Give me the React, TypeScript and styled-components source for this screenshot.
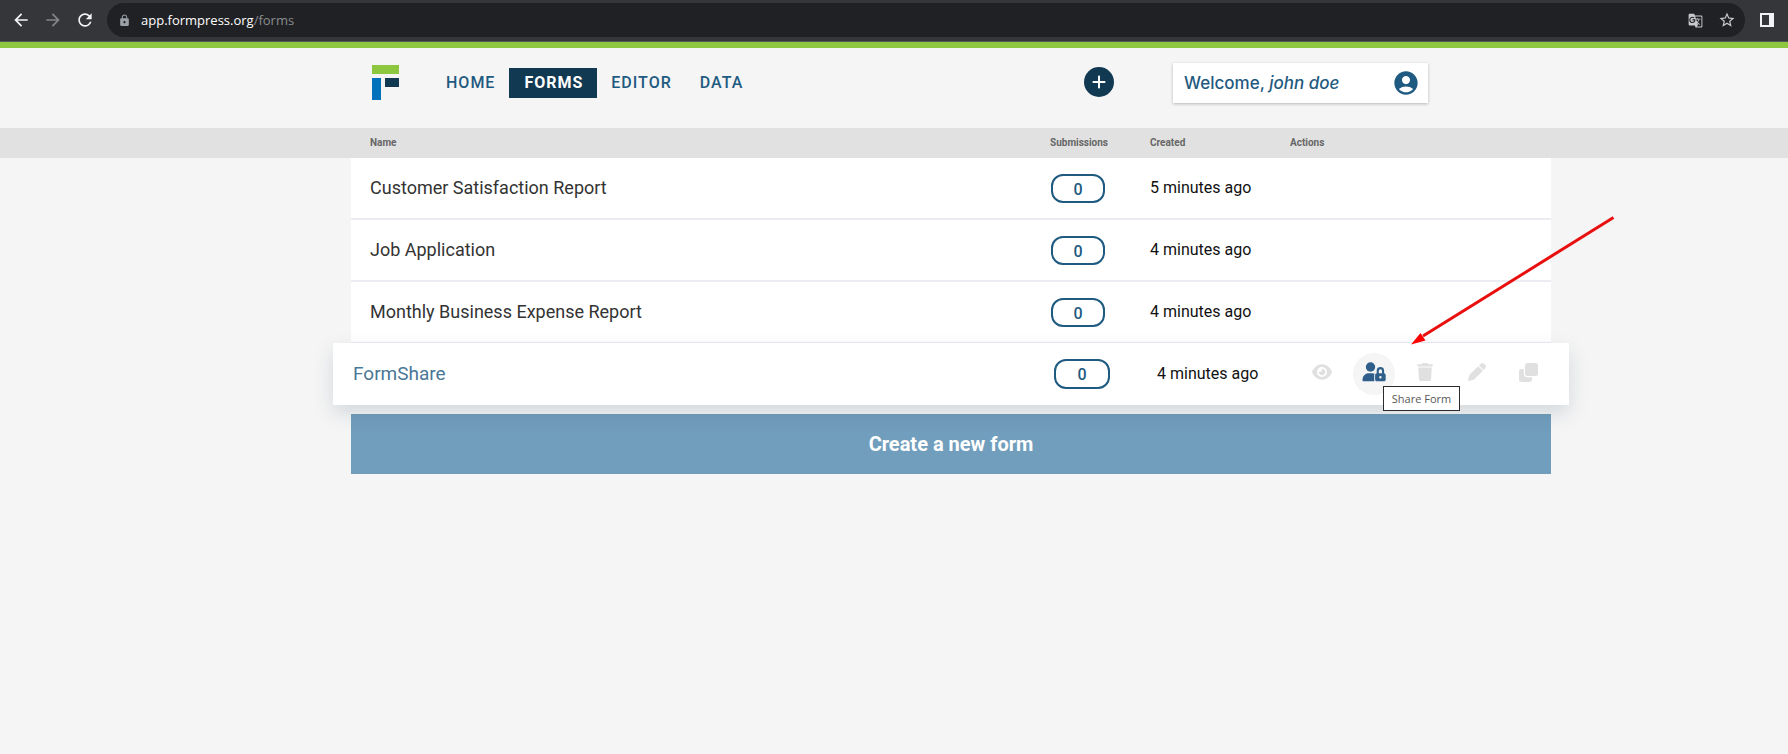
import React from "react";
import styled, { createGlobalStyle, css } from "styled-components";
import { FaEye, FaTrash, FaPen, FaPlus } from "react-icons/fa6";
import {
  MdAccountCircle,
  MdArrowBack,
  MdArrowForward,
  MdGTranslate,
  MdLock,
  MdRefresh,
  MdStarBorder,
} from "react-icons/md";

const GlobalStyle = createGlobalStyle`
  * { box-sizing: border-box; }
  body {
    margin: 0;
    background: #f5f5f5;
    font-family: Roboto, "Liberation Sans", sans-serif;
  }
  button { font: inherit; border: 0; padding: 0; cursor: pointer; }
`;

const BrowserBar = styled.div`
  display: flex;
  align-items: center;
  height: 42px;
  padding: 0 14px 1px 11px;
  background: #35363a;
  border-bottom: 1px solid #55565a;
`;

const BrowserButton = styled.button<{ $dim?: boolean }>`
  display: flex;
  align-items: center;
  justify-content: center;
  width: 20px;
  height: 20px;
  margin-right: 12px;
  background: none;
  color: ${(p) => (p.$dim ? "#85868a" : "#f1f3f4")};
`;

const AddressBar = styled.div`
  display: flex;
  flex: 1;
  align-items: center;
  height: 34px;
  margin-right: 15px;
  padding: 0 8px 0 11px;
  border-radius: 17px;
  background: #202124;
  color: #9aa0a6;
  gap: 12px;
`;

const Url = styled.span`
  flex: 1;
  margin-left: -2px;
  color: #8a8d91;
  font: 13px/18px "Open Sans", "Noto Sans", sans-serif;
`;

const UrlHost = styled.span`
  color: #ffffff;
`;

const AddressButton = styled.button`
  display: flex;
  align-items: center;
  justify-content: center;
  width: 20px;
  height: 20px;
  background: none;
  color: #c7c9cc;
`;

const Header = styled.header`
  padding-left: 114px;
  border-top: 6px solid #8dc63f;
`;

const HeaderInner = styled.div`
  display: flex;
  align-items: flex-start;
  max-width: 1200px;
  height: 80px;
  margin: 0 auto;
  padding: 15px 123px 0 21px;
`;

const Logo = styled.a`
  display: block;
  width: 27px;
  height: 35px;
  margin: 2px 33px 0 0;
`;

const Nav = styled.nav`
  display: flex;
  flex: 1;
  margin-top: 5px;
`;

const NavLink = styled.a<{ $active?: boolean }>`
  padding: 0 14px;
  padding-left: ${(p) => (p.$active ? 15 : 14)}px;
  color: ${(p) => (p.$active ? "#ffffff" : "#1f5a80")};
  background: ${(p) => (p.$active ? "#123952" : "transparent")};
  font-size: 16px;
  font-weight: ${(p) => (p.$active ? 700 : 500)};
  line-height: 30px;
  letter-spacing: 1px;
  text-decoration: none;
`;

const AddButton = styled.button`
  display: flex;
  align-items: center;
  justify-content: center;
  width: 30px;
  height: 30px;
  margin: 4px 59px 0 0;
  border-radius: 50%;
  background: #123952;
  color: #ffffff;
`;

const Welcome = styled.div`
  display: flex;
  align-items: center;
  justify-content: space-between;
  width: 255px;
  height: 40px;
  padding: 0 8px 0 11px;
  background: #ffffff;
  box-shadow: 0 1px 3px rgba(0, 0, 0, 0.25);
  color: #1f5a80;
  font: 500 17px/36px Inter, sans-serif;
`;

const TableArea = styled.div`
  position: relative;
`;

const FormsTable = styled.table`
  display: block;
`;

const columns = css`
  display: grid;
  grid-template-columns: minmax(0, 1fr) 100px 140px 261px;
  align-items: center;
`;

const TableHead = styled.thead`
  display: block;
  padding-left: 114px;
  background: #e1e1e1;
`;

const HeadRow = styled.tr`
  ${columns}
  max-width: 1200px;
  height: 30px;
  margin: 0 auto;
  padding-left: 19px;
`;

const HeadCell = styled.th`
  padding: 0;
  color: #666666;
  font-size: 10px;
  font-weight: 700;
  line-height: 14px;
  text-align: left;
`;

const TableBody = styled.tbody`
  display: block;
  padding-left: 114px;
`;

const Row = styled.tr<{ $hovered?: boolean }>`
  ${columns}
  max-width: 1200px;
  height: 62px;
  margin: 0 auto;
  padding-left: 19px;
  background: #ffffff;
  border-bottom: 2px solid #ececf2;

  ${(p) =>
    p.$hovered &&
    css`
      position: relative;
      z-index: 1;
      grid-template-columns: minmax(0, 1fr) 104px 144px 268px;
      max-width: 1236px;
      margin-top: -1px;
      padding-left: 20px;
      border-bottom: 0;
      box-shadow: 0 8px 20px rgba(18, 57, 82, 0.15);
    `}
`;

const Cell = styled.td`
  padding: 0;
  color: #111111;
  font-size: 16px;
  line-height: 24px;
`;

const NameCell = styled(Cell)<{ $hovered?: boolean }>`
  color: ${(p) => (p.$hovered ? "#4b7797" : "#333333")};
  font-size: ${(p) => (p.$hovered ? 19 : 18)}px;
`;

const Count = styled.span<{ $hovered?: boolean }>`
  display: block;
  width: ${(p) => (p.$hovered ? 56 : 54)}px;
  height: ${(p) => (p.$hovered ? 30 : 29)}px;
  margin-left: 1px;
  padding-top: 1px;
  border: 2px solid #1f5a80;
  border-radius: 12px;
  color: #1f5a80;
  font-weight: 500;
  line-height: 26px;
  text-align: center;
`;

const Actions = styled.div`
  display: flex;
  justify-content: space-between;
  width: 248px;
`;

const ActionButton = styled.button<{ $active?: boolean }>`
  display: flex;
  align-items: center;
  justify-content: center;
  width: 42px;
  height: 42px;
  padding-bottom: 4px;
  border-radius: 50%;
  background: ${(p) => (p.$active ? "#f5f5f5" : "none")};
  color: ${(p) => (p.$active ? "#2f5f8a" : "#e0e0e0")};
`;

const Tooltip = styled.div`
  position: absolute;
  z-index: 2;
  top: 43px;
  right: 109px;
  width: 77px;
  height: 25px;
  border: 1px solid #2b2b2b;
  background: #ffffff;
  color: #575757;
  font: 11px/23px "Open Sans", "Noto Sans", sans-serif;
  text-align: center;
  white-space: nowrap;
`;

const Arrow = styled.svg`
  position: absolute;
  z-index: 3;
  right: 173px;
  top: 88px;
  pointer-events: none;
`;

const Footer = styled.div`
  padding: 9px 0 0 114px;
`;

const CreateButton = styled.button`
  display: block;
  width: 100%;
  max-width: 1200px;
  height: 60px;
  margin: 0 auto;
  background: #719ebc;
  color: #ffffff;
  font-size: 20px;
  font-weight: 700;
`;

const UserLockIcon = () => (
  <svg width="24" height="20" viewBox="0 0 24 20" fill="currentColor" aria-hidden="true">
    <circle cx="8.500" cy="5" r="4.700" />
    <path d="M0.500 18.200C0.500 14 3.300 11.300 7 11.300H10.500C11.400 11.300 12 11.500 12.600 11.800C12.300 12.300 12.200 12.800 12.200 13.300V17.500C12.200 18.200 12.300 18.800 12.600 19.300H1.500C0.900 19.300 0.500 18.900 0.500 18.200Z" />
    <path
      fillRule="evenodd"
      d="M14.700 11.300V8.800a3.700 3.700 0 0 1 7.400 0V11.300C23.100 11.500 23.700 12.200 23.700 13.100V17.400C23.700 18.500 22.900 19.300 21.800 19.300H15C13.900 19.300 13.100 18.500 13.100 17.400V13.100C13.100 12.200 13.700 11.500 14.700 11.300ZM16.800 11.200H20V8.800a1.600 1.600 0 0 0-3.200 0ZM18.400 14a1.200 1.200 0 1 0 0 2.400a1.200 1.200 0 1 0 0-2.400Z"
    />
  </svg>
);

const CloneIcon = () => (
  <svg width="19" height="19" viewBox="0 0 19 19" fill="currentColor" aria-hidden="true">
    <rect x="6" width="13" height="13" rx="2.500" />
    <path d="M4.800 6H2.500A2.500 2.500 0 0 0 0 8.500V16.500A2.500 2.500 0 0 0 2.500 19H10.500A2.500 2.500 0 0 0 13 16.500V14.200H8.500A3.700 3.700 0 0 1 4.800 10.500Z" />
  </svg>
);

const forms = [
  { name: "Customer Satisfaction Report", count: 0, created: "5 minutes ago" },
  { name: "Job Application", count: 0, created: "4 minutes ago" },
  { name: "Monthly Business Expense Report", count: 0, created: "4 minutes ago" },
  { name: "FormShare", count: 0, created: "4 minutes ago", hovered: true },
];

const actions = [
  { label: "Preview Form", icon: <FaEye size={20} /> },
  { label: "Share Form", icon: <UserLockIcon />, active: true },
  { label: "Delete Form", icon: <FaTrash size={18} /> },
  { label: "Edit Form", icon: <FaPen size={18} /> },
  { label: "Clone Form", icon: <CloneIcon /> },
];

export default function App() {
  return (
    <>
      <GlobalStyle />
      <BrowserBar>
        <BrowserButton aria-label="Back"><MdArrowBack size={20} /></BrowserButton>
        <BrowserButton aria-label="Forward" $dim><MdArrowForward size={20} /></BrowserButton>
        <BrowserButton aria-label="Reload"><MdRefresh size={20} /></BrowserButton>
        <AddressBar>
          <MdLock size={13} />
          <Url><UrlHost>app.formpress.org</UrlHost>/forms</Url>
          <AddressButton aria-label="Translate"><MdGTranslate size={15} /></AddressButton>
          <AddressButton aria-label="Bookmark"><MdStarBorder size={18} /></AddressButton>
        </AddressBar>
        <svg width="14" height="14" viewBox="0 0 14 14" aria-hidden="true">
          <path fill="#f1f3f4" fillRule="evenodd" d="M0 0h14v14H0zM2 2v10h7V2z" />
        </svg>
      </BrowserBar>

      <Header>
        <HeaderInner>
          <Logo href="#" aria-label="FormPress">
            <svg width="27" height="35" viewBox="0 0 27 35">
              <rect width="27" height="9" fill="#8dc63f" />
              <rect y="13" width="9" height="22" fill="#0072bc" />
              <rect x="13" y="13" width="14" height="9" fill="#123952" />
            </svg>
          </Logo>
          <Nav>
            <NavLink href="#home">HOME</NavLink>
            <NavLink href="#forms" $active>FORMS</NavLink>
            <NavLink href="#editor">EDITOR</NavLink>
            <NavLink href="#data">DATA</NavLink>
          </Nav>
          <AddButton aria-label="New form"><FaPlus size={16} /></AddButton>
          <Welcome>
            <span>Welcome, <em>john doe</em></span>
            <MdAccountCircle size={28} />
          </Welcome>
        </HeaderInner>
      </Header>

      <TableArea>
        <FormsTable>
          <TableHead>
            <HeadRow>
              <HeadCell>Name</HeadCell>
              <HeadCell>Submissions</HeadCell>
              <HeadCell>Created</HeadCell>
              <HeadCell>Actions</HeadCell>
            </HeadRow>
          </TableHead>
          <TableBody>
            {forms.map((form) => (
              <Row key={form.name} $hovered={form.hovered}>
                <NameCell $hovered={form.hovered}>{form.name}</NameCell>
                <Cell><Count $hovered={form.hovered}>{form.count}</Count></Cell>
                <Cell>{form.created}</Cell>
                <Cell>
                  {form.hovered && (
                    <>
                      <Actions>
                        {actions.map((action) => (
                          <ActionButton key={action.label} aria-label={action.label} $active={action.active}>
                            {action.icon}
                          </ActionButton>
                        ))}
                      </Actions>
                      <Tooltip role="tooltip">Share Form</Tooltip>
                    </>
                  )}
                </Cell>
              </Row>
            ))}
          </TableBody>
        </FormsTable>
        <Arrow width="204" height="129" viewBox="0 0 204 129" aria-hidden="true">
          <path d="M202.500 1.500L12 120" stroke="#e8100f" strokeWidth="3" fill="none" />
          <path d="M0 128.500L9.500 117L14.500 124.500Z" fill="#ff0000" />
        </Arrow>
      </TableArea>

      <Footer>
        <CreateButton>Create a new form</CreateButton>
      </Footer>
    </>
  );
}
